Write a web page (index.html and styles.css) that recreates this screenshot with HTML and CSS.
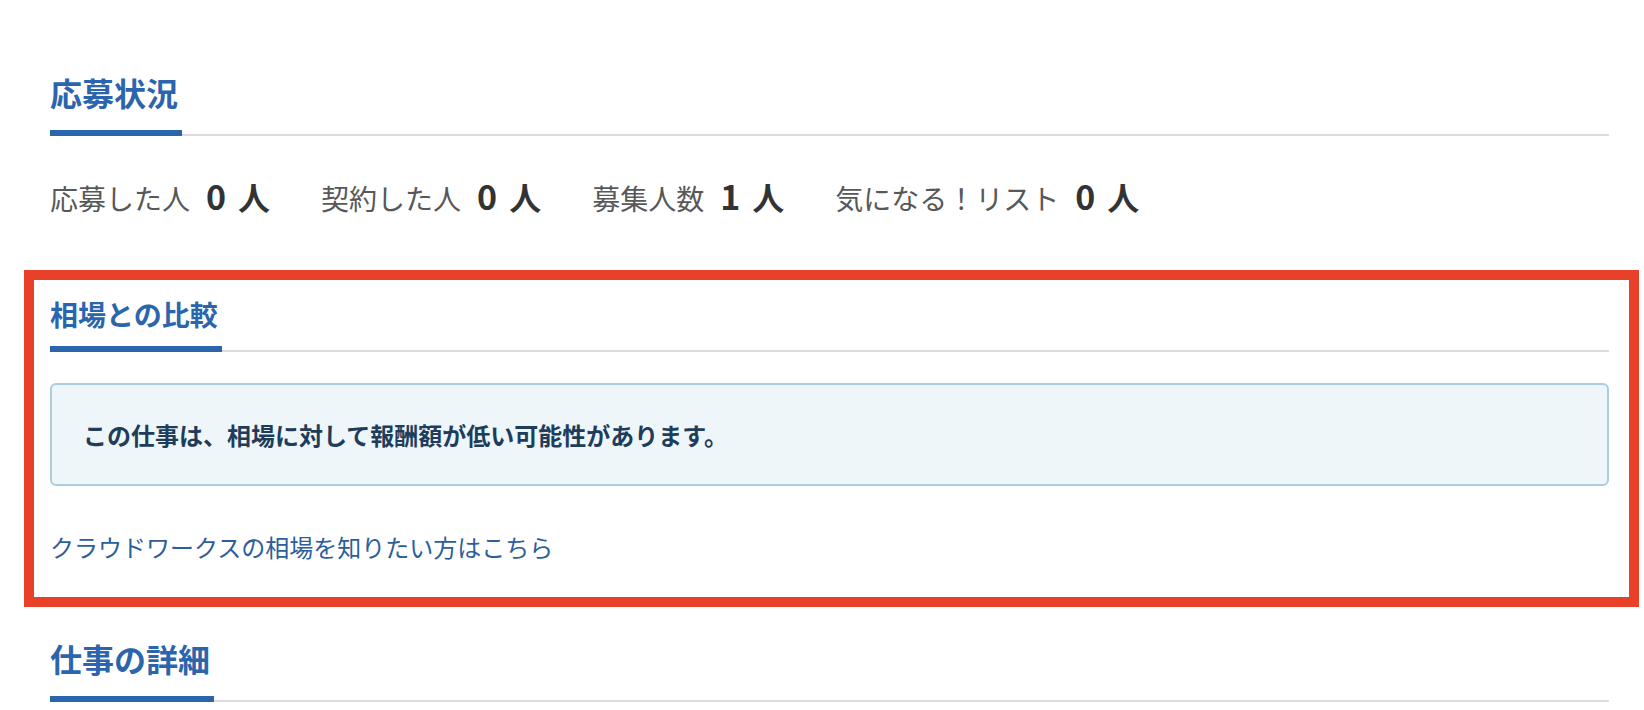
FILE: index.html
```html
<!DOCTYPE html>
<html lang="ja">
<head>
<meta charset="utf-8">
<link rel="stylesheet" href="styles.css">
</head>
<body>

<main class="job-page">

  <!-- 応募状況 -->
  <section class="section">
    <div class="section-head">
      <h2 class="section-title">応募状況</h2>
    </div>
    <ul class="stats">
      <li class="stat"><span class="stat-label">応募した人</span><span class="stat-value">0</span><span class="stat-unit">人</span></li>
      <li class="stat"><span class="stat-label">契約した人</span><span class="stat-value">0</span><span class="stat-unit">人</span></li>
      <li class="stat"><span class="stat-label">募集人数</span><span class="stat-value">1</span><span class="stat-unit">人</span></li>
      <li class="stat"><span class="stat-label">気になる！リスト</span><span class="stat-value">0</span><span class="stat-unit">人</span></li>
    </ul>
  </section>

  <!-- 相場との比較 -->
  <section class="section section-highlight">
    <div class="section-head">
      <h3 class="section-subtitle">相場との比較</h3>
    </div>
    <div class="notice">この仕事は、相場に対して報酬額が低い可能性があります。</div>
    <a class="market-link" href="#">クラウドワークスの相場を知りたい方はこちら</a>
  </section>

  <!-- 仕事の詳細 -->
  <section class="section section-detail">
    <div class="section-head">
      <h2 class="section-title">仕事の詳細</h2>
    </div>
  </section>

</main>

</body>
</html>
```

FILE: styles.css
```css
/* ベース */
body {
  margin: 0;
  background: #fff;
  font-family: "Noto Sans CJK JP", "Noto Sans", sans-serif;
  color: #333;
}
.job-page {
  padding: 68px 35px 0 50px;
}

/* 見出し */
.section-head {
  display: flex;
  border-bottom: 2px solid #dcdcdc;
}
.section-title,
.section-subtitle {
  margin: 0 0 -2px 0;
  padding-right: 4px;
  color: #2b65ad;
  font-weight: 700;
  border-bottom: 6px solid #2b65ad;
}
.section-title {
  font-size: 32px;
  line-height: 48px;
  padding-bottom: 14px;
}
.section-subtitle {
  font-size: 28px;
  line-height: 42px;
  padding-bottom: 11px;
}

/* 応募状況 */
.stats {
  display: flex;
  list-style: none;
  margin: 36px 0 0;
  padding: 0;
}
.stat {
  display: flex;
  align-items: baseline;
  line-height: 48px;
  margin-right: 51px;
}
.stat-label {
  font-size: 28px;
  color: #585858;
  margin-right: 16px;
}
.stat-value,
.stat-unit {
  font-size: 32px;
  font-weight: 700;
  color: #333;
}
.stat-value {
  font-size: 34px;
  margin-right: 12px;
}

/* 相場との比較（赤枠） */
.section-highlight {
  margin: 48px -30px 0 -26px;
  border: 10px solid #e9402a;
  padding: 13px 20px 32px 16px;
}
.notice {
  margin-top: 31px;
  padding: 32px 31px 31px;
  background: #eef6fa;
  border: 2px solid #aacde2;
  border-radius: 6px;
  font-size: 24px;
  line-height: 36px;
  font-weight: 700;
  color: #1e3d5a;
}
.market-link {
  display: block;
  margin-top: 43px;
  font-size: 24px;
  line-height: 36px;
  color: #2b5e9b;
  text-decoration: none;
}

/* 仕事の詳細 */
.section-detail {
  margin-top: 27px;
}
```
